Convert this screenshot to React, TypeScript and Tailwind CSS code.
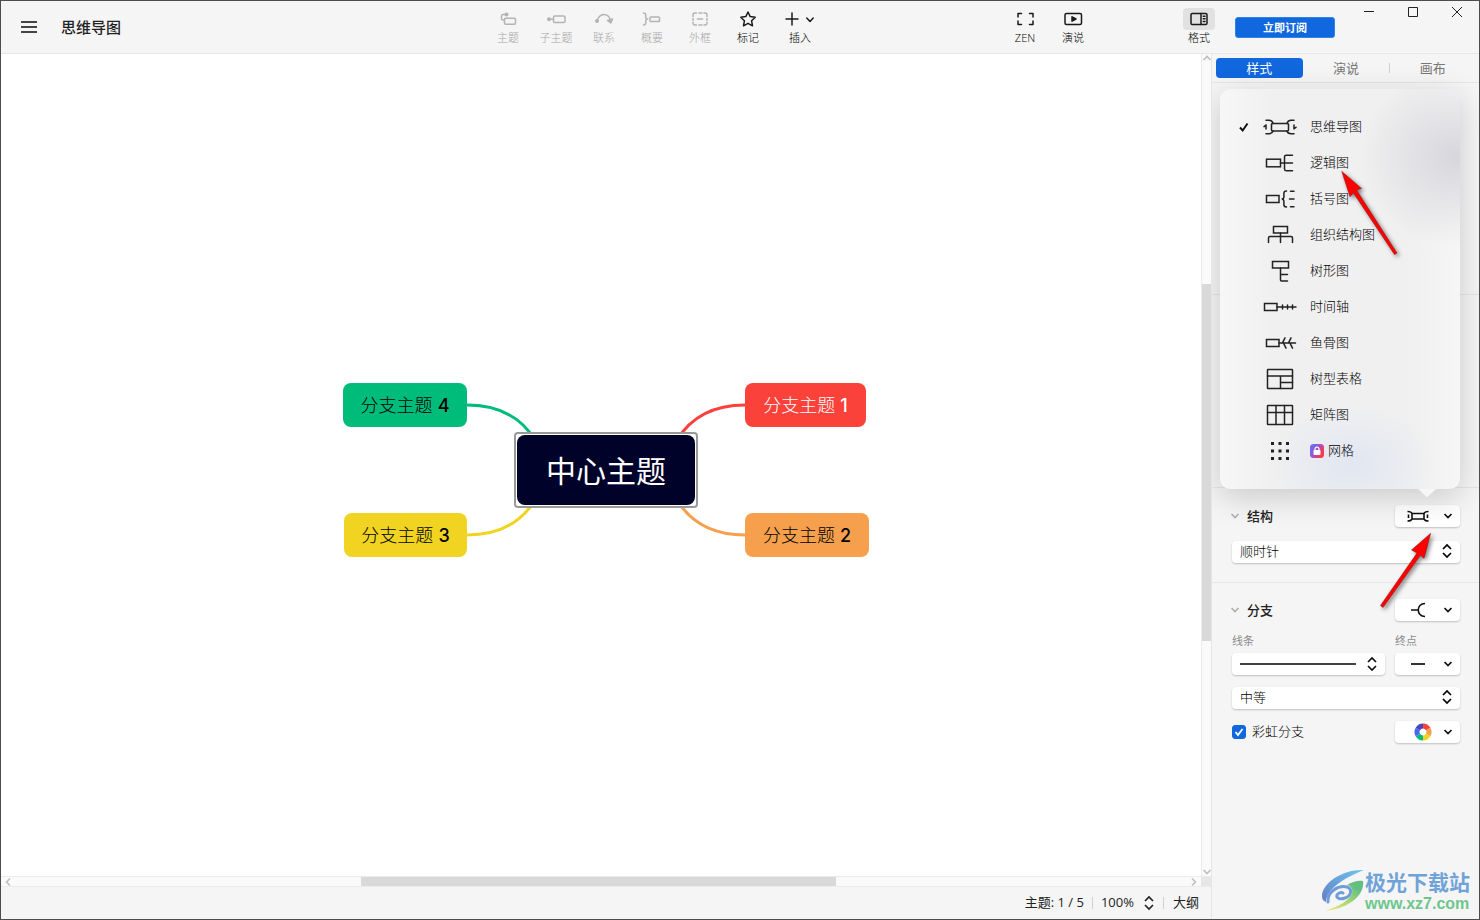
import { useState, type ReactNode } from "react";
import clsx from "clsx";

type ToolProps = {
  label: string;
  disabled?: boolean;
  active?: boolean;
  wide?: boolean;
  children: ReactNode;
};

function ToolButton({ label, disabled, active, wide, children }: ToolProps) {
  return (
    <button
      type="button"
      disabled={disabled}
      className={clsx(
        "flex shrink-0 flex-col items-center",
        wide ? "w-14" : "w-12",
        disabled ? "text-[#b4b4b4]" : "text-[#1a1a1a]"
      )}
    >
      <span className={clsx("rounded", active && "bg-[#e1e1e1]")}>
        <svg
          width={wide ? 56 : 32}
          height="22"
          fill="none"
          stroke="currentColor"
          strokeWidth="1.5"
          strokeLinecap="round"
          strokeLinejoin="round"
        >
          {children}
        </svg>
      </span>
      <span className={clsx("text-[11px] leading-4", disabled ? "text-[#a6a6a6]" : "text-black")}>
        {label}
      </span>
    </button>
  );
}

function Chevron({ className }: { className?: string }) {
  return (
    <svg width="10" height="8" fill="none" stroke="currentColor" strokeWidth="1.7" className={className}>
      <path d="M1.5 2 5 5.5 8.5 2" />
    </svg>
  );
}

function UpDown({ className }: { className?: string }) {
  return (
    <svg
      width="10"
      height="16"
      fill="none"
      stroke="currentColor"
      strokeWidth="1.7"
      className={className}
    >
      <path d="M1 6 5 2l4 4M1 10l4 4 4-4" />
    </svg>
  );
}

const structures: { name: string; icon: ReactNode; locked?: boolean }[] = [
  {
    name: "思维导图",
    icon: (
      <>
        <rect x="9.5" y="8.5" width="17" height="7.5" rx="1" />
        <path d="M4 5.3h3c2.400 0 3.500 1 4 3.200M4 18.700h3c2.400 0 3.500-.8 4-2.700M32 5.300h-3c-2.400 0-3.500 1-4 3.200M32 18.700h-3c-2.400 0-3.500-.8-4-2.700" />
        <path d="M4 10v4M2 11.600 4 10M32 10v4M34 12.300l-2 1.400" />
      </>
    ),
  },
  {
    name: "逻辑图",
    icon: (
      <>
        <rect x="4.5" y="8.2" width="14" height="7.6" />
        <path d="M18.5 12h12M30.5 4.2h-6.3q-1.7 0-1.7 1.7v12.2q0 1.7 1.7 1.7h6.3" />
      </>
    ),
  },
  {
    name: "括号图",
    icon: (
      <>
        <rect x="4.5" y="8.5" width="12.5" height="7" />
        <path d="M24.5 4c-1.8 0-2.6.6-2.6 2.2v3.2c0 1.6-.7 2.6-2.2 2.6 1.5 0 2.2 1 2.2 2.6v3.2c0 1.6.8 2.2 2.6 2.2M28.5 4.3h3.5M27.5 12h4.5M28.5 19.7h3.5" />
      </>
    ),
  },
  {
    name: "组织结构图",
    icon: (
      <>
        <rect x="11.5" y="3.5" width="14" height="6.5" />
        <path d="M18.5 10v9.5M6.5 19.5V15q0-1.5 1.5-1.5h21q1.5 0 1.5 1.5v4.5" />
      </>
    ),
  },
  {
    name: "树形图",
    icon: (
      <>
        <rect x="10.5" y="2.5" width="16" height="6.5" />
        <path d="M18.5 9v12q0 1 1 1h6M18.5 15.5h7" />
      </>
    ),
  },
  {
    name: "时间轴",
    icon: (
      <>
        <rect x="2.5" y="8.5" width="12.5" height="7" />
        <path d="M15 12h19M20.5 10v4M25.5 10v4M30.5 10v4" />
      </>
    ),
  },
  {
    name: "鱼骨图",
    icon: (
      <>
        <rect x="4.5" y="8.5" width="12.5" height="7" />
        <path d="M17 12h16.5M20.5 11.8l2.5-5M21.5 12.2l2.5 5M26.5 11.8l2.5-5M28 12.2l2.5 5" />
      </>
    ),
  },
  {
    name: "树型表格",
    icon: (
      <>
        <rect x="5.5" y="2.5" width="25" height="19" rx="0.5" />
        <path d="M5.5 9h25M18.5 9v12.5M18.5 15.5h12" />
      </>
    ),
  },
  {
    name: "矩阵图",
    icon: (
      <>
        <rect x="5.5" y="2.5" width="25" height="19" rx="0.5" />
        <path d="M5.5 9.5h25M14 2.5v19M22.5 2.5v19" />
      </>
    ),
  },
  {
    name: "网格",
    locked: true,
    icon: (
      <path
        d="M9 3h3v3H9zM16.5 3h3v3h-3zM24 3h3v3h-3zM9 10.5h3v3H9zM16.5 10.5h3v3h-3zM24 10.5h3v3h-3zM9 18h3v3H9zM16.5 18h3v3h-3zM24 18h3v3h-3z"
        fill="currentColor"
        stroke="none"
      />
    ),
  },
];

function LockBadge() {
  return (
    <svg width="14" height="14" className="mr-1">
      <defs>
        <linearGradient id="lock" x1="0" x2="1" y1="0.2" y2="0.8">
          <stop offset="0.1" stopColor="#6b6cf0" />
          <stop offset="0.5" stopColor="#a94fc4" />
          <stop offset="0.8" stopColor="#f53a52" />
        </linearGradient>
      </defs>
      <rect width="14" height="14" rx="3.5" fill="url(#lock)" />
      <rect x="3.5" y="6" width="7" height="5" rx="1" fill="#fff" />
      <path d="M5 6.5V5.2a2 2 0 0 1 4 0v1.3" fill="none" stroke="#fff" strokeWidth="1.2" />
    </svg>
  );
}

function StructureMenu({ value, onPick }: { value: string; onPick: (v: string) => void }) {
  return (
    <div className="absolute top-[35px] right-[19px] left-2 rounded-[10px] bg-[#f1f1f1] bg-[radial-gradient(ellipse_95px_90px_at_235px_68px,#d7d6dc,#d7d6dc00),radial-gradient(ellipse_85px_60px_at_132px_375px,#e1e6f1,#e1e6f100),linear-gradient(90deg,#f7f7f7,#f0f0f0_22%,#f0f0f0_80%,#f6f6f6)] py-5 shadow-[0_8px_32px_rgba(0,0,0,0.18)]">
      <ul>
        {structures.map((s) => (
          <li key={s.name}>
            <button
              type="button"
              onClick={() => onPick(s.name)}
              className="flex h-9 w-full items-center pl-[18px] text-[13px] text-black"
            >
              <svg width="12" height="12" fill="none" stroke="#111" strokeWidth="2">
                {s.name === value && <path d="m2 6.5 2.7 3L9.5 2.5" />}
              </svg>
              <svg
                width="36"
                height="24"
                fill="none"
                stroke="#222"
                strokeWidth="1.5"
                strokeLinecap="round"
                className="mr-3 ml-3 text-[#222222]"
              >
                {s.icon}
              </svg>
              {s.locked && <LockBadge />}
              {s.name}
            </button>
          </li>
        ))}
      </ul>
      <svg width="18" height="9" className="absolute top-full right-6">
        <path d="M0 0h18l-8 7.5q-1 1-2 0z" fill="#f7f7f7" />
      </svg>
    </div>
  );
}

function MenuButton({ label, children }: { label: string; children: ReactNode }) {
  return (
    <button
      type="button"
      aria-label={label}
      className="flex h-[22px] w-[65px] shrink-0 items-center justify-between rounded bg-white pr-[7px] pl-2 text-[#111111] shadow-[0_1px_2px_rgba(0,0,0,0.22)]"
    >
      <svg width="30" height="20" fill="none" stroke="currentColor" strokeWidth="1.6">
        {children}
      </svg>
      <Chevron />
    </button>
  );
}

function SelectBox({ label, options }: { label: string; options: string[] }) {
  return (
    <div className="relative text-black">
      <select
        aria-label={label}
        className="block h-[22px] w-full appearance-none rounded bg-white px-2 text-[13px] shadow-[0_1px_2px_rgba(0,0,0,0.22)]"
      >
        {options.map((o) => (
          <option key={o}>{o}</option>
        ))}
      </select>
      <UpDown className="pointer-events-none absolute top-0.5 right-2" />
    </div>
  );
}

function SectionTitle({ title, children }: { title: string; children: ReactNode }) {
  return (
    <div className="flex items-center justify-between">
      <h2 className="flex items-center text-[13px] leading-[22px] font-medium text-[#222222]">
        <Chevron className="mr-[7px] -ml-0.5 text-[#b0b0b0]" />
        {title}
      </h2>
      {children}
    </div>
  );
}

const topics = [
  { no: 4, style: "top-0 left-0 w-[124px] bg-[#00bc7b] text-black" },
  { no: 3, style: "bottom-0 left-px w-[123px] bg-[#f1d322] text-black" },
  { no: 1, style: "top-0 left-[402px] w-[121px] bg-[#fb423a] text-white" },
  { no: 2, style: "bottom-0 left-[402px] w-[124px] bg-[#f6a04d] text-black" },
];

function MindMap() {
  return (
    <div className="relative h-[174px] w-[526px] shrink-0 font-['Inter','Noto_Sans_CJK_SC',sans-serif]">
      <svg width="526" height="174" fill="none" strokeWidth="3" className="absolute inset-0">
        <path d="M124 22c32 0 54 12 68 35" stroke="#00bc7b" />
        <path d="M124 152c32 0 54-12 68-35" stroke="#f1d322" />
        <path d="M402 22c-32 0-54 12-68 35" stroke="#fb423a" />
        <path d="M402 152c-32 0-54-12-68-35" stroke="#f6a04d" />
      </svg>
      {topics.map((t) => (
        <div
          key={t.no}
          className={clsx(
            "absolute flex h-11 items-center justify-center rounded-lg pt-0.5 text-lg whitespace-pre",
            t.style
          )}
        >
          分支主题 <span className="font-medium">{t.no}</span>
        </div>
      ))}
      <div className="absolute top-[49px] left-[171px] rounded border-2 border-[#999999] bg-white p-px">
        <div className="flex h-[70px] w-[178px] items-center justify-center rounded-lg bg-[#000229] pt-0.5 text-[30px] font-normal text-white">
          中心主题
        </div>
      </div>
    </div>
  );
}

function Watermark() {
  return (
    <div className="absolute right-[9px] bottom-[5px] flex items-center">
      <svg width="44" height="44" className="-mt-0.5">
        <defs>
          <linearGradient id="wmBlue" x1="0" x2="1" y1="1" y2="0">
            <stop offset="0" stopColor="#6580c6" />
            <stop offset="1" stopColor="#6cc4ee" />
          </linearGradient>
          <linearGradient id="wmGreen" x1="0" x2="1" y1="1" y2="0">
            <stop offset="0" stopColor="#f6e66c" />
            <stop offset="0.4" stopColor="#b5da74" />
            <stop offset="0.8" stopColor="#62bf80" />
          </linearGradient>
        </defs>
        <path d="M43 1C22 0 1 14 1 27c0 3 1 5 4 6C5 21 22 9 43 1z" fill="url(#wmBlue)" />
        <path
          d="M7 33c-1-10 10-17 19-15 6 2 4 9-2 11-5 2-9 0-8-3 1-2 4-3 6-2"
          fill="none"
          stroke="#6f9cda"
          strokeWidth="3"
          strokeLinecap="round"
        />
        <path
          d="M26 16c5-3 11-5 16-4 2 12-11 27-38 30 13-4 25-11 27-18 1-4-1-7-5-8z"
          fill="url(#wmGreen)"
        />
      </svg>
      <div>
        <div className="text-[21px] leading-6 font-bold text-[#6fa3d8]">极光下载站</div>
        <div className="font-['Liberation_Sans',sans-serif] text-base leading-5 font-bold text-[#6fc68c]">
          www.xz7.com
        </div>
      </div>
    </div>
  );
}

export default function App() {
  const [structure, setStructure] = useState("思维导图");
  const [rainbow, setRainbow] = useState(true);

  return (
    <div className="flex h-screen flex-col overflow-hidden border border-[#4d4d4d] bg-[#f5f5f5] font-['Open_Sans','Noto_Sans_CJK_SC',sans-serif] font-light text-[#222222]">
      <header className="flex h-[53px] shrink-0 border-b border-[#e6e6e6] pt-[7px]">
        <div className="flex w-[483px] items-start pt-2 pl-5">
          <button type="button" aria-label="菜单">
            <svg width="16" height="22" stroke="#444" strokeWidth="2">
              <path d="M0 6h16M0 11h16M0 16h16" />
            </svg>
          </button>
          <h1 className="ml-6 text-[15px] leading-[22px] font-medium">思维导图</h1>
        </div>

        <ToolButton label="主题" disabled>
          <rect x="12.5" y="10.2" width="11" height="6" rx="1.2" />
          <path d="M14 6.5h-3q-1.5 0-1.5 1.5v2.5q0 1.5 1.5 1.5h1.500" />
          <circle cx="14.5" cy="6.5" r="1.3" fill="currentColor" />
        </ToolButton>
        <ToolButton label="子主题" disabled>
          <rect x="13.5" y="8" width="11.5" height="6.5" rx="1.2" />
          <path d="M9 11.2h4.5" />
          <circle cx="9" cy="11.2" r="1.3" fill="currentColor" />
        </ToolButton>
        <ToolButton label="联系" disabled>
          <circle cx="9" cy="13" r="1.3" fill="currentColor" />
          <path d="M9 12.5C12 4.5 20 4.5 22.5 12" />
          <path d="m19.5 12.5 3.3 2.5 1.7-4z" fill="currentColor" />
        </ToolButton>
        <ToolButton label="概要" disabled>
          <path d="M7.5 5c1.6 0 2.2.6 2.2 2v2c0 1.3.6 2 2 2-1.4 0-2 .7-2 2v2c0 1.4-.6 2-2.2 2" />
          <rect x="14" y="9" width="9.5" height="4.5" rx="0.8" />
        </ToolButton>
        <ToolButton label="外框" disabled>
          <path d="M9 8.5V7q0-2 2-2h1.5M15 5h3M20 5h1q2 0 2 2v1.5M23 10.5v2M23 14.5v.5q0 2-2 2h-1M18 17h-3M12.5 17H11q-2 0-2-2v-.5M9 12.5v-2M13.5 11h5" />
        </ToolButton>
        <ToolButton label="标记">
          <path d="m16 4 2.200 4.600 5 .7-3.600 3.500.9 5L16 15.400l-4.500 2.400.9-5-3.600-3.500 5-.7z" />
        </ToolButton>
        <ToolButton label="插入" wide>
          <path d="M20 5v12M14 11h12" />
          <path d="m34.800 10 3.200 3.500 3.200-3.500" />
        </ToolButton>

        <div className="flex-1" />

        <ToolButton label="ZEN">
          <path d="M9 9V5.500h3.500M20.500 5.500H24V9M24 13v3.500h-3.500M12.500 16.500H9V13" />
        </ToolButton>
        <ToolButton label="演说">
          <rect x="8" y="5.5" width="16.5" height="11" rx="1.5" />
          <path d="m15 8.800 4 2.200-4 2.200z" fill="currentColor" />
        </ToolButton>
        <div className="w-[78px]" />
        <ToolButton label="格式" active>
          <rect x="8" y="5.5" width="16" height="11" rx="1.2" />
          <path d="M18 5.500v11M20.300 8.200h1.700M20.300 10.800h1.700M20.300 13.400h1.700" />
        </ToolButton>
        <button
          type="button"
          className="mt-[9px] ml-3 h-[21px] w-[100px] shrink-0 rounded-[3px] border border-[#2f83e6] bg-[#1067de] text-[11px] leading-[19px] font-bold text-white"
        >
          立即订阅
        </button>
        <div className="ml-[28px] flex w-[116px] shrink-0 items-start justify-between pr-4">
          {[
            ["最小化", "M1 5.5h10"],
            ["最大化", "M1.5 1.5h9v9h-9z"],
            ["关闭", "m1 1 10 10M11 1 1 11"],
          ].map(([label, d]) => (
            <button key={label} type="button" aria-label={label}>
              <svg width="12" height="12" fill="none" stroke="#222" className="-mt-0.5">
                <path d={d} />
              </svg>
            </button>
          ))}
        </div>
      </header>

      <div className="flex min-h-0 flex-1">
        <div className="flex min-w-0 flex-1 flex-col">
          <div className="flex min-h-0 flex-1">
            <main className="flex min-w-0 flex-1 items-center justify-center overflow-hidden bg-white pt-[10px] pl-[10px]">
              <MindMap />
            </main>
            <div className="flex w-[10px] shrink-0 flex-col items-center justify-between border-l border-[#ebebeb] bg-[#fafafa]">
              <Chevron className="shrink-0 rotate-180 text-[#c0c0c0]" />
              <div className="w-full grow-[222]" />
              <div className="w-full grow-[357] bg-[#d9d9d9]" />
              <div className="w-full grow-[227]" />
              <Chevron className="shrink-0 text-[#c0c0c0]" />
            </div>
          </div>
          <div className="flex h-[11px] shrink-0 border-y border-[#ebebeb] bg-[#fafafa]">
            <div className="flex flex-1 items-center">
              <Chevron className="mx-0.5 rotate-90 text-[#c0c0c0]" />
              <div className="grow-[346]" />
              <div className="h-full grow-[475] bg-[#d9d9d9]" />
              <div className="grow-[351]" />
              <Chevron className="mx-0.5 -rotate-90 text-[#c0c0c0]" />
            </div>
            <div className="w-[10px] bg-[#e6e6e6]" />
          </div>
          <footer className="flex h-8 shrink-0 items-center justify-end pr-3 text-[13px] font-normal">
            <span>主题: 1 / 5</span>
            <span className="mx-2 h-3 w-px bg-[#d0d0d0]" />
            <button type="button" className="flex items-center">
              100%
              <UpDown className="ml-[10px]" />
            </button>
            <span className="mx-[9px] h-3 w-px bg-[#d0d0d0]" />
            <button type="button">大纲</button>
          </footer>
        </div>

        <aside className="relative w-[268px] shrink-0 overflow-hidden border-l border-[#e6e6e6]">
          <nav className="grid h-[29px] grid-cols-3 items-start border-b border-[#e6e6e6] pt-1 pr-[3px] pl-1 text-[13px] leading-5 font-normal text-[#777777]">
            <button type="button" className="rounded bg-[#1067de] text-white">
              样式
            </button>
            <button type="button">演说</button>
            <button type="button" className="relative">
              画布
              <span className="absolute top-[5px] left-0 h-2.5 w-px bg-[#d0d0d0]" />
            </button>
          </nav>
          <section className="h-[212px] border-b border-[#e6e6e6]" />
          <section className="h-[193px] border-b border-[#e6e6e6]" />

          <section className="border-b border-[#e6e6e6] pt-[17px] pr-[19px] pb-[19px] pl-5">
            <SectionTitle title="结构">
              <MenuButton label={structure}>
                <path d="M9 7.5h12V13H9zM4.500 5.500c2.500 0 4 .5 4.500 2M4.500 15c2.500 0 4-.5 4.500-2M25.500 5.500c-2.500 0-4 .5-4.500 2M25.500 15c-2.500 0-4-.5-4.500-2M5.500 8.500V12M24.500 8.500V12" />
              </MenuButton>
            </SectionTitle>
            <div className="mt-3.5">
              <SelectBox label="方向" options={["顺时针", "逆时针"]} />
            </div>
          </section>

          <section className="flex flex-col pt-4 pr-[19px] pl-5">
            <SectionTitle title="分支">
              <MenuButton label="分支样式">
                <path d="M8 10h7M22 3.500c-9 0-9 13 0 13" />
              </MenuButton>
            </SectionTitle>
            <div className="mt-3 flex gap-[10px] text-[11px] leading-4 font-normal text-[#8c8c8c]">
              <span className="flex-1">线条</span>
              <span className="w-[65px]">终点</span>
            </div>
            <div className="mt-1 flex gap-[10px]">
              <button
                type="button"
                aria-label="线条"
                className="flex h-[22px] flex-1 items-center justify-between rounded bg-white px-2 shadow-[0_1px_2px_rgba(0,0,0,0.22)]"
              >
                <span className="h-0.5 w-[116px] bg-[#444444]" />
                <UpDown className="text-[#111111]" />
              </button>
              <MenuButton label="终点">
                <path d="M8 10h14" stroke="#333" strokeWidth="2" />
              </MenuButton>
            </div>
            <div className="mt-3">
              <SelectBox label="粗细" options={["中等", "细", "粗"]} />
            </div>
            <div className="mt-3 flex items-center justify-between">
              <label className="flex items-center gap-1.5 text-[13px] text-black">
                <span className="relative flex">
                  <input
                    type="checkbox"
                    checked={rainbow}
                    onChange={(e) => setRainbow(e.target.checked)}
                    className="h-3.5 w-3.5 appearance-none rounded-[3px] border border-[#1067de] bg-white checked:bg-[#1067de]"
                  />
                  <svg
                    width="14"
                    height="14"
                    fill="none"
                    stroke="#fff"
                    strokeWidth="1.8"
                    className="pointer-events-none absolute inset-0"
                  >
                    <path d="m3.500 7 2.500 3 4.500-6" />
                  </svg>
                </span>
                彩虹分支
              </label>
              <MenuButton label="配色">
                <g strokeWidth="5" transform="translate(20 10)">
                  <path d="M0-6A6 6 0 0 1 5.200-3" stroke="#fb423a" />
                  <path d="M5.200-3A6 6 0 0 1 5.200 3" stroke="#f6a04d" />
                  <path d="M5.200 3A6 6 0 0 1 0 6" stroke="#f1d322" />
                  <path d="M0 6A6 6 0 0 1-5.200 3" stroke="#00bc7b" />
                  <path d="M-5.200 3A6 6 0 0 1-5.200-3" stroke="#4a68f5" />
                  <path d="M-5.200-3A6 6 0 0 1 0-6" stroke="#4b46b8" />
                </g>
              </MenuButton>
            </div>
          </section>

          <StructureMenu value={structure} onPick={setStructure} />

          <svg
            width="150"
            height="460"
            fill="#fe0000"
            stroke="#8c1010"
            strokeWidth="0.5"
            className="pointer-events-none absolute top-[110px] right-[39px] drop-shadow-[2px_2px_2px_rgba(0,0,0,0.5)]"
          >
            <path d="m51.700 7.300 19.800 17.200-5 1.500 40.500 63-2.500 1.500-41-61.500-3.500 3.700z" />
            <path d="m140.700 369.300-6.700 25-3.500-3L93 443.500l-2.500-2L127 389l-5.500-3z" />
          </svg>
          <Watermark />
        </aside>
      </div>
    </div>
  );
}
